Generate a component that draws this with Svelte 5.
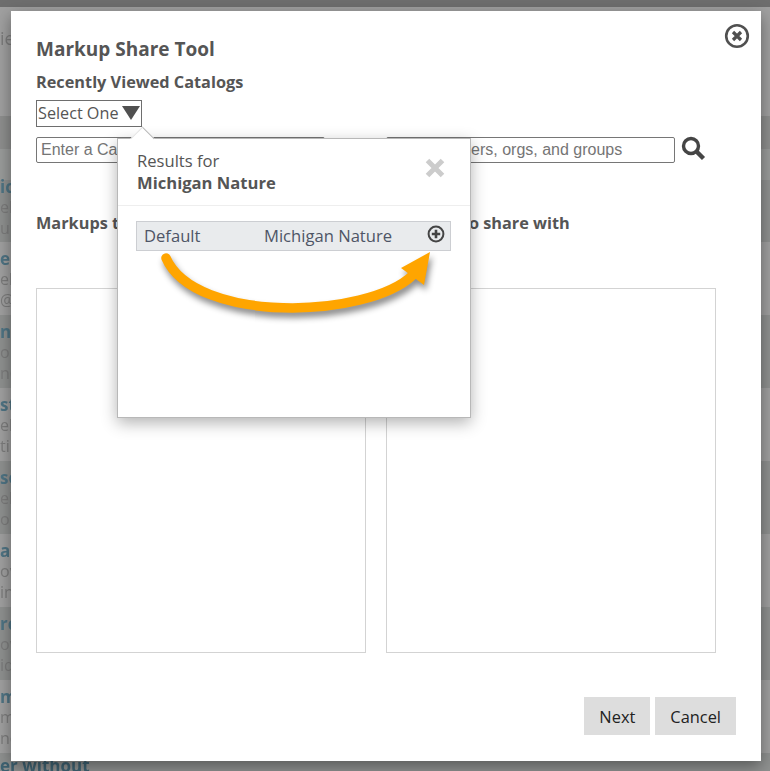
<script>
  const rows = [
    { title: 'ic', top: 'el', bottom: 'un', dark: true, first: true },
    { title: 'e l', top: 'el', bottom: '@a', dark: false },
    { title: 'n', top: 'ol', bottom: 'n@', dark: true },
    { title: 'sti', top: 'el', bottom: 'tir', dark: false },
    { title: 'se', top: 'el', bottom: 'or', dark: true },
    { title: 'ai', top: 'ov', bottom: 'in', dark: false },
    { title: 'rc', top: 'ov', bottom: 'id', dark: true },
    { title: 'm', top: 'm', bottom: 'no', dark: false },
  ]
</script>

<div class="page">
  <div class="topbar"></div>
  <div class="intro"><span>ie</span></div>
  <div class="band"></div>
  <div class="gap"></div>
  {#each rows as row}
    <div class="row" class:dark={row.dark} class:first={row.first}>
      <b>{row.title}</b>
      <span>{row.top}</span>
      <span>{row.bottom}</span>
    </div>
  {/each}
  <div class="last"><b>er without</b></div>
</div>

<div class="modal">
  <svg class="close" width="26" height="26" viewBox="0 0 26 26">
    <circle cx="13" cy="13" r="10.8" fill="none" stroke="#505050" stroke-width="2.6" />
    <path d="M9 9l8 8M17 9l-8 8" fill="none" stroke="#505050" stroke-width="3.2" />
  </svg>
  <h1>Markup Share Tool</h1>
  <h2>Recently Viewed Catalogs</h2>
  <div class="select">
    Select One
    <svg width="18" height="14" viewBox="0 0 18 14"><path d="M0 0h18L9 14z" fill="#505050" /></svg>
  </div>
  <div class="search">
    <input placeholder="Enter a Catalog name" />
    <span class="or">oo</span>
    <input placeholder="Enter all users, orgs, and groups" />
    <svg width="26" height="26" viewBox="0 0 26 26">
      <circle cx="10" cy="10" r="7.5" fill="none" stroke="#454545" stroke-width="3.4" />
      <path d="M15.5 15.5l7 7" fill="none" stroke="#454545" stroke-width="4.4" />
    </svg>
  </div>
  <div class="columns">
    <div class="col">
      <h2>Markups to share</h2>
      <div class="list"></div>
    </div>
    <div class="col">
      <h2>Contacts to share with</h2>
      <div class="list"></div>
    </div>
  </div>
  <div class="actions">
    <button>Next</button>
    <button>Cancel</button>
  </div>

  <div class="popup">
    <div class="tail"></div>
    <div class="popup-head">
      <div>
        Results for<br />
        <b>Michigan Nature</b>
      </div>
      <svg width="20" height="20" viewBox="0 0 20 20">
        <path d="M2.5 2.5l15 15M17.5 2.5l-15 15" fill="none" stroke="#cccccc" stroke-width="5" />
      </svg>
    </div>
    <div class="popup-body">
      <div class="result">
        <span class="name">Default</span>
        <span class="owner">Michigan Nature</span>
        <svg width="18" height="18" viewBox="0 0 18 18">
          <circle cx="9" cy="9" r="7.4" fill="none" stroke="#444444" stroke-width="2" />
          <path d="M9 4.8v8.4M4.8 9h8.4" fill="none" stroke="#444444" stroke-width="2.6" />
        </svg>
      </div>
    </div>
  </div>

  <svg class="arrow" width="320" height="90" viewBox="0 0 320 90">
    <path d="M16 17C45 83 217 78 263 34" fill="none" stroke="#ffa500" stroke-width="9.5" stroke-linecap="round" />
    <path d="M280 11L251 27L274 44z" fill="#ffa500" />
  </svg>
</div>

<style>
  :global(body) {
    background: #a0a0a0;
    overflow: hidden;
  }
  .page {
    height: 771px;
    overflow: hidden;
    font-family: 'Open Sans', sans-serif;
    font-size: 16px;
    color: #7c7c7c;
    filter: blur(0.5px);
  }
  .topbar {
    height: 7px;
    background: #6e6e6e;
  }
  .intro {
    height: 109px;
    padding-top: 19px;
    box-sizing: border-box;
    font-size: 18px;
  }
  .band {
    height: 33px;
    background: #8e8f8e;
  }
  .gap {
    height: 31px;
    background: #9a9c9b;
  }
  .row {
    display: flex;
    flex-direction: column;
    height: 73px;
    box-sizing: border-box;
    padding-top: 6px;
    line-height: 21px;
    white-space: nowrap;
    background: #a0a0a0;
  }
  .row.dark {
    background: #8f9190;
  }
  .row.first {
    height: 62px;
    padding-top: 0;
  }
  .row.first b {
    margin-top: -4px;
  }
  .row b {
    color: #4f7484;
    font-size: 17px;
  }
  .last {
    background: #8f9190;
    height: 20px;
    line-height: 26px;
  }
  .last b {
    color: #3f6373;
    font-size: 17px;
  }
  .modal {
    position: absolute;
    left: 11px;
    top: 11px;
    width: 750px;
    height: 750px;
    box-sizing: border-box;
    padding: 25px 25px 0;
    background: #fff;
    box-shadow: 0 5px 15px rgba(0, 0, 0, 0.4);
    font-family: 'Open Sans', sans-serif;
    color: #555;
    font-size: 16.2px;
  }
  .close {
    position: absolute;
    right: 11px;
    top: 12px;
  }
  h1 {
    margin: 0 0 9px;
    font-size: 19px;
    line-height: 26px;
  }
  h2 {
    margin: 0;
    font-size: 16.3px;
    line-height: 22px;
  }
  .select {
    display: flex;
    align-items: center;
    justify-content: space-between;
    width: 106px;
    height: 27px;
    margin-top: 7px;
    padding: 0 1px 2px;
    box-sizing: border-box;
    border: 1px solid #6e6e6e;
  }
  .search {
    display: flex;
    align-items: center;
    margin-top: 10px;
  }
  input {
    width: 289px;
    height: 26px;
    box-sizing: border-box;
    padding: 1px 4px;
    border: 1px solid #767676;
    border-radius: 2px;
    font-family: 'Liberation Sans', Arial, sans-serif;
    font-size: 16px;
  }
  .or {
    align-self: flex-start;
    width: 61px;
    box-sizing: border-box;
    margin-top: -9px;
    padding-left: 10px;
    font-weight: 700;
    font-size: 15px;
    line-height: 26px;
    color: #333;
  }
  .search svg {
    margin: -2px 0 0 6px;
  }
  .columns {
    display: flex;
    gap: 20px;
    margin-top: 49px;
  }
  .col {
    width: 330px;
  }
  .list {
    height: 365px;
    margin-top: 54px;
    box-sizing: border-box;
    border: 1px solid #d3d3d3;
  }
  .actions {
    display: flex;
    justify-content: flex-end;
    gap: 5px;
    margin-top: 44px;
  }
  button {
    height: 38px;
    padding: 0 15px;
    border: 0;
    background: #dddddd;
    color: #222;
    font-family: 'Open Sans', sans-serif;
    font-size: 16.4px;
  }
  .popup {
    position: absolute;
    left: 106px;
    top: 127px;
    width: 354px;
    height: 280px;
    box-sizing: border-box;
    background: #fff;
    border: 1px solid #b8b8b8;
    box-shadow: 0 5px 15px rgba(0, 0, 0, 0.3);
    font-size: 16.6px;
  }
  .tail {
    position: absolute;
    left: 16px;
    top: -9px;
    width: 16px;
    height: 16px;
    background: #fff;
    border-top: 1px solid #b8b8b8;
    border-left: 1px solid #e4e4e4;
    transform: rotate(45deg);
  }
  .popup-head {
    position: relative;
    display: flex;
    justify-content: space-between;
    align-items: flex-start;
    padding: 11px 25px 11px 19px;
    line-height: 22px;
    border-bottom: 1px solid #eeeeee;
  }
  .popup-head svg {
    margin-top: 8px;
  }
  .popup-body {
    padding: 15px 19px 15px 18px;
  }
  .result {
    display: flex;
    align-items: center;
    height: 30px;
    box-sizing: border-box;
    padding: 0 5px 1px 7px;
    background: #e9ebed;
    border: 1px solid #ccced2;
    color: #4e5566;
  }
  .name {
    width: 120px;
  }
  .owner {
    flex: 1;
  }
  .result svg {
    margin-bottom: 4px;
  }
  .arrow {
    position: absolute;
    left: 139px;
    top: 230px;
    filter: drop-shadow(2px 5px 3px rgba(0, 0, 0, 0.45));
  }
</style>
